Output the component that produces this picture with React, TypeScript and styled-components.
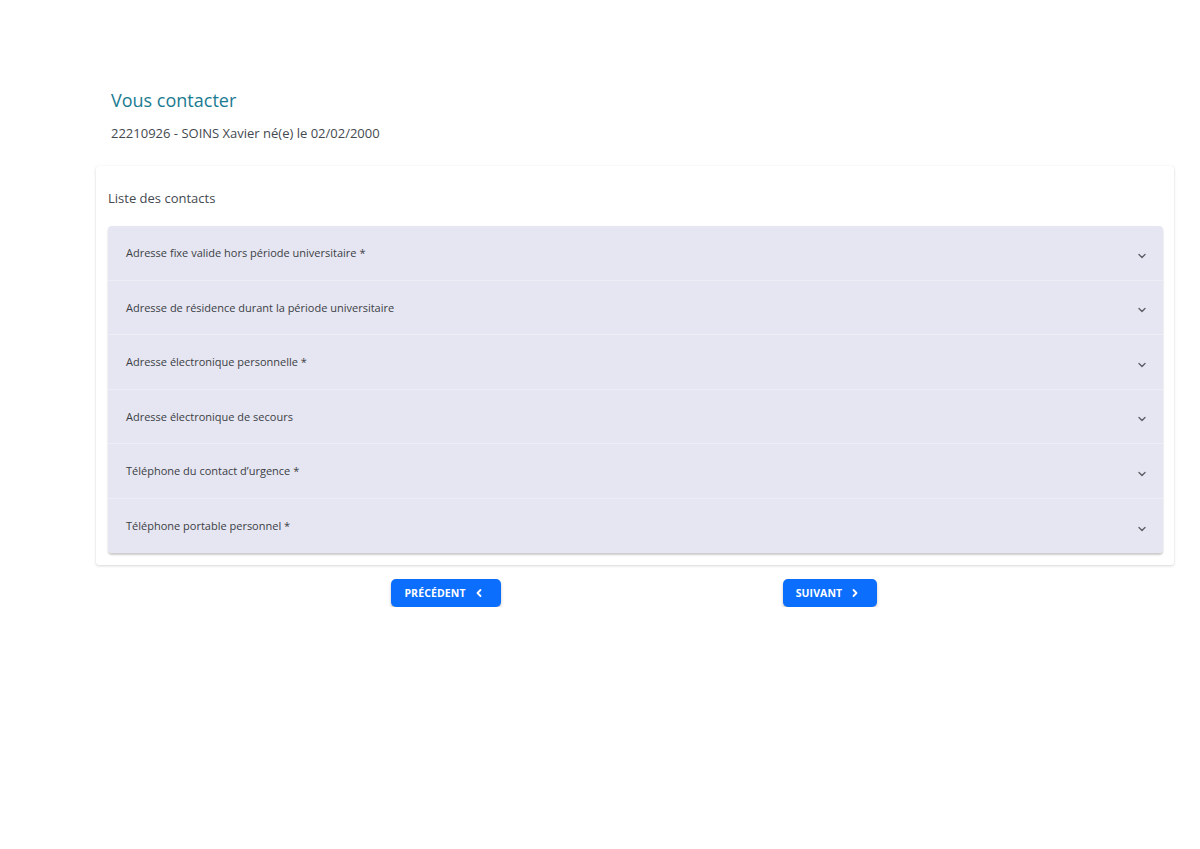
import styled, { createGlobalStyle } from "styled-components";

const GlobalStyle = createGlobalStyle`
  html, body {
    margin: 0;
    padding: 0;
    background: #ffffff;
    font-family: "Open Sans", "Liberation Sans", sans-serif;
  }
`;

const Page = styled.div`
  padding: 86px 26px 0 96px;
`;

const Header = styled.div`
  padding-left: 15px;
  margin-bottom: 23px;
`;

const Title = styled.h1`
  margin: 0;
  font-size: 18px;
  font-weight: 400;
  line-height: 28px;
  color: #1a7b91;
`;

const Subtitle = styled.p`
  margin: 9px 0 0;
  font-size: 13px;
  line-height: 20px;
  color: #444950;
`;

const Card = styled.section`
  background: #fff;
  border-radius: 3px;
  box-shadow: 0 1px 3px rgba(0, 0, 0, 0.16), 0 0 1px rgba(0, 0, 0, 0.05);
  padding: 22px 11px 12px 12px;
`;

const CardTitle = styled.h2`
  margin: 0 0 18px;
  font-size: 13px;
  font-weight: 400;
  line-height: 20px;
  color: #454950;
`;

const Accordion = styled.div`
  border-radius: 4px;
  overflow: hidden;
  box-shadow: 0 2px 2px rgba(0, 0, 0, 0.2), 0 0 1px rgba(0, 0, 0, 0.08);
`;

const Row = styled.div<{ $last?: boolean }>`
  display: flex;
  align-items: center;
  justify-content: space-between;
  height: 54.5px;
  padding: 0 16px 0 18px;
  background: #e6e6f2;
  border-bottom: ${({ $last }) => ($last ? "none" : "1px solid #ededf5")};
  box-sizing: border-box;
  font-size: 11px;
  color: #3b3e44;
`;

const Chevron = styled.svg`
  width: 10px;
  height: 10px;
  margin-top: 6px;
  color: #5d6066;
`;

const Actions = styled.div`
  display: grid;
  grid-template-columns: 1fr 1fr;
  width: 768px;
  margin: 14px 0 0 158px;
`;

const Cell = styled.div`
  display: flex;
  justify-content: center;
`;

const Button = styled.button`
  display: inline-flex;
  align-items: center;
  gap: 8px;
  height: 28px;
  padding: 0 17px 0 13px;
  border: none;
  border-radius: 5px;
  background: #0b6efd;
  color: #fff;
  font-family: "Open Sans", "Liberation Sans", sans-serif;
  font-size: 10.5px;
  font-weight: 700;
  letter-spacing: 0.1px;
  box-shadow: 0 2px 3px rgba(0, 0, 0, 0.25);
  cursor: pointer;
`;

const ArrowIcon = styled.svg`
  width: 10px;
  height: 10px;
`;

const items = [
  "Adresse fixe valide hors période universitaire *",
  "Adresse de résidence durant la période universitaire",
  "Adresse électronique personnelle *",
  "Adresse électronique de secours",
  "Téléphone du contact d’urgence *",
  "Téléphone portable personnel *",
];

const App = () => {
  return (
    <>
      <GlobalStyle />
      <Page>
        <Header>
          <Title>Vous contacter</Title>
          <Subtitle>22210926 - SOINS Xavier né(e) le 02/02/2000</Subtitle>
        </Header>
        <Card>
          <CardTitle>Liste des contacts</CardTitle>
          <Accordion>
            {items.map((label, i) => (
              <Row key={label} $last={i === items.length - 1}>
                <span>{label}</span>
                <Chevron viewBox="0 0 10 10" fill="none">
                  <path
                    d="M2 3.5 L5 6.5 L8 3.5"
                    stroke="currentColor"
                    strokeWidth="1.4"
                    strokeLinecap="round"
                    strokeLinejoin="round"
                  />
                </Chevron>
              </Row>
            ))}
          </Accordion>
        </Card>
        <Actions>
          <Cell>
            <Button>
              PRÉCÉDENT
              <ArrowIcon viewBox="0 0 10 10" fill="none">
                <path
                  d="M6.5 2 L3.5 5 L6.5 8"
                  stroke="currentColor"
                  strokeWidth="1.8"
                  strokeLinecap="round"
                  strokeLinejoin="round"
                />
              </ArrowIcon>
            </Button>
          </Cell>
          <Cell>
            <Button>
              SUIVANT
              <ArrowIcon viewBox="0 0 10 10" fill="none">
                <path
                  d="M3.5 2 L6.5 5 L3.5 8"
                  stroke="currentColor"
                  strokeWidth="1.8"
                  strokeLinecap="round"
                  strokeLinejoin="round"
                />
              </ArrowIcon>
            </Button>
          </Cell>
        </Actions>
      </Page>
    </>
  );
};

export default App;
